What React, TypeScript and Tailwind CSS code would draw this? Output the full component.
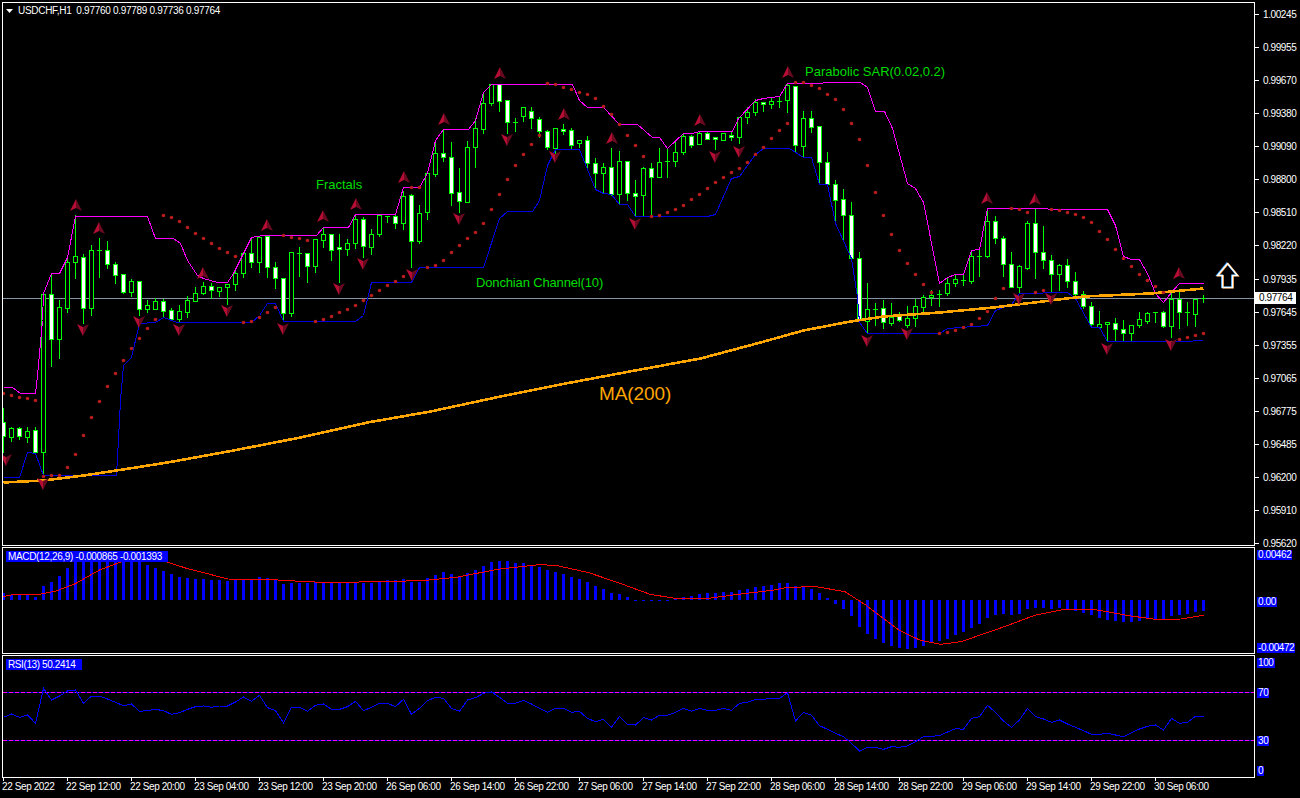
const GREEN = "#00ff00";

// high, body top, body bottom, low, white body (y values in page pixels, candle i sits at x = 3 + 8i)
const candles: number[][] = [
  [408, 422, 436, 452, 1], [427, 428, 437, 441, 0], [427, 428, 436, 439, 1], [427, 431, 437, 442, 0], [427, 430, 452, 452, 1],
  [294, 294, 452, 473, 0], [273, 294, 339, 366, 1], [300, 307, 339, 358, 0], [255, 262, 308, 312, 0], [215, 256, 262, 278, 0],
  [254, 257, 308, 323, 1], [245, 250, 308, 315, 0], [238, 250, 250, 277, 0], [241, 250, 264, 268, 1], [262, 264, 275, 283, 1],
  [274, 274, 292, 293, 1], [279, 281, 292, 296, 0], [281, 281, 309, 315, 1], [300, 305, 309, 312, 0], [298, 301, 309, 309, 0],
  [299, 301, 311, 317, 1], [308, 310, 319, 319, 1], [305, 311, 319, 322, 0], [296, 300, 312, 317, 0], [287, 293, 301, 301, 0],
  [282, 286, 293, 294, 0], [283, 286, 290, 298, 1], [287, 287, 291, 296, 0], [284, 284, 287, 304, 0], [270, 273, 284, 290, 0],
  [253, 253, 273, 277, 0], [237, 253, 262, 267, 1], [237, 237, 262, 272, 0], [236, 236, 267, 277, 1], [262, 267, 278, 288, 1],
  [278, 278, 313, 320, 1], [252, 252, 313, 316, 0], [247, 253, 253, 276, 0], [253, 253, 266, 282, 1], [239, 239, 266, 272, 0],
  [227, 234, 240, 247, 0], [234, 234, 250, 260, 1], [234, 247, 249, 282, 1], [239, 243, 249, 255, 0], [215, 219, 243, 248, 0],
  [217, 219, 246, 257, 1], [229, 234, 247, 254, 0], [215, 215, 234, 236, 0], [216, 216, 216, 222, 0], [215, 216, 223, 228, 1],
  [191, 196, 223, 229, 0], [194, 195, 241, 267, 1], [205, 213, 241, 243, 0], [172, 173, 212, 219, 0], [143, 153, 174, 176, 0],
  [129, 153, 157, 161, 1], [142, 157, 193, 205, 1], [168, 192, 201, 212, 1], [141, 147, 202, 202, 0], [118, 128, 147, 167, 0],
  [92, 103, 129, 133, 0], [84, 84, 103, 105, 0], [84, 84, 101, 111, 1], [100, 100, 122, 133, 1], [118, 122, 122, 131, 0],
  [107, 107, 116, 121, 0], [107, 111, 118, 128, 1], [117, 119, 131, 137, 1], [130, 131, 147, 149, 1], [128, 128, 148, 157, 0],
  [124, 129, 131, 134, 1], [128, 130, 145, 148, 1], [140, 140, 143, 147, 0], [136, 140, 163, 167, 1], [158, 163, 173, 189, 1],
  [163, 167, 173, 193, 0], [148, 167, 194, 195, 1], [151, 161, 194, 203, 0], [161, 161, 193, 200, 1], [180, 193, 196, 216, 1],
  [167, 168, 195, 215, 0], [163, 168, 177, 215, 1], [148, 162, 177, 177, 0], [148, 161, 161, 177, 0], [142, 152, 161, 166, 0],
  [133, 136, 152, 154, 0], [135, 136, 145, 147, 1], [131, 133, 144, 144, 0], [131, 133, 139, 139, 1], [137, 137, 139, 149, 1],
  [133, 133, 140, 140, 0], [131, 135, 137, 140, 1], [117, 117, 137, 143, 0], [107, 112, 117, 123, 0], [99, 102, 112, 115, 0],
  [102, 102, 104, 111, 1], [98, 101, 104, 108, 0], [97, 101, 101, 107, 0], [84, 85, 100, 112, 0], [86, 86, 145, 152, 1],
  [111, 118, 146, 157, 0], [111, 118, 127, 132, 1], [126, 126, 162, 184, 1], [152, 162, 184, 184, 1], [180, 184, 200, 224, 1],
  [189, 199, 215, 240, 1], [202, 215, 258, 259, 1], [252, 258, 320, 320, 1], [283, 309, 321, 333, 0], [303, 309, 309, 325, 0],
  [300, 308, 322, 328, 1], [303, 317, 323, 325, 0], [312, 316, 320, 321, 1], [306, 318, 325, 327, 0], [299, 306, 318, 326, 0],
  [295, 297, 307, 311, 0], [290, 295, 297, 305, 0], [290, 294, 294, 306, 0], [278, 283, 293, 295, 0], [275, 279, 283, 286, 0],
  [275, 280, 280, 285, 0], [250, 256, 281, 283, 0], [250, 256, 256, 276, 0], [208, 221, 256, 257, 0], [216, 221, 238, 243, 1],
  [236, 238, 264, 276, 1], [252, 264, 287, 287, 1], [265, 266, 287, 293, 0], [221, 223, 268, 269, 0], [208, 223, 252, 278, 1],
  [226, 252, 260, 268, 1], [255, 260, 274, 292, 1], [264, 265, 274, 290, 0], [259, 265, 281, 287, 1], [272, 281, 294, 295, 1],
  [291, 294, 306, 308, 1], [302, 306, 324, 325, 1], [311, 324, 327, 327, 0], [322, 322, 324, 341, 0], [318, 323, 329, 341, 1],
  [320, 329, 333, 341, 1], [325, 325, 333, 341, 0], [312, 319, 325, 327, 0], [312, 313, 321, 323, 0], [312, 312, 312, 322, 0],
  [311, 312, 326, 327, 1], [293, 299, 326, 337, 0], [290, 299, 312, 328, 1], [302, 312, 312, 325, 0], [299, 299, 314, 326, 0],
  [295, 298, 298, 302, 0],
];

const upper = [[3,387],[12,387],[20,393],[35,393],[37,375],[42,320],[43,293],[51,273],[59,273],[67,257],[75,216],[147,216],[155,238],[173,238],[180,243],[187,260],[197,275],[203,278],[217,282],[227,282],[233,273],[243,253],[251,237],[263,235],[316,235],[323,227],[348,227],[355,214],[395,214],[403,187],[419,187],[427,173],[435,140],[443,129],[468,129],[475,120],[483,92],[491,84],[572,84],[579,100],[587,107],[603,107],[619,124],[637,124],[652,137],[659,137],[667,148],[683,133],[692,133],[699,131],[732,131],[738,118],[755,100],[763,98],[779,96],[787,83],[860,82],[867,87],[875,111],[884,111],[892,128],[907,183],[915,188],[923,202],[939,283],[947,277],[955,274],[963,274],[971,250],[979,249],[987,208],[1107,209],[1115,225],[1123,256],[1131,259],[1139,259],[1147,273],[1155,293],[1163,302],[1171,292],[1179,283],[1203,283]];

const lower = [[3,477],[19,477],[27,452],[35,453],[43,475],[116,475],[117,457],[120,400],[123,365],[131,357],[139,323],[155,322],[163,317],[177,322],[251,322],[259,315],[267,303],[275,303],[283,321],[355,321],[363,315],[371,282],[411,282],[419,267],[483,267],[499,218],[507,211],[532,211],[539,200],[547,165],[555,149],[579,149],[595,189],[603,193],[611,194],[619,204],[627,204],[635,216],[707,216],[715,214],[731,178],[739,176],[755,154],[763,148],[789,148],[803,157],[811,157],[819,184],[827,184],[835,223],[851,258],[857,297],[859,322],[867,333],[939,333],[947,328],[987,325],[995,310],[1011,304],[1019,293],[1067,292],[1075,298],[1091,327],[1099,327],[1107,341],[1183,341],[1203,340]];

const ma200 = [[3,482],[43,480],[83,475],[116,470],[167,462],[233,450],[300,437],[367,422],[430,411],[500,396],[560,384],[640,369],[700,358],[760,342],[803,330],[850,321],[883,316],[939,312],[993,307],[1050,300],[1083,296],[1150,293],[1203,288]];

// parabolic SAR, [candle index, y]
const sar: number[][] = [[0,393],[1,395],[2,397],[3,398],[4,400],[5,476],[6,475],[7,475],[8,467],[9,454],[10,435],[11,417],[12,401],[13,386],[14,373],[15,360],[16,348],[17,338],[18,328],[19,319],[20,215],[21,217],[22,221],[23,227],[24,233],[25,238],[26,243],[27,248],[28,252],[29,256],[30,322],[31,321],[32,317],[33,312],[34,307],[35,235],[36,237],[37,238],[38,240],[39,321],[40,319],[41,316],[42,312],[43,309],[44,305],[45,300],[46,295],[47,290],[48,285],[49,281],[50,276],[51,187],[52,187],[53,267],[54,265],[55,260],[56,252],[57,245],[58,238],[59,232],[60,223],[61,209],[62,194],[63,179],[64,165],[65,154],[66,144],[67,135],[68,83],[69,84],[70,87],[71,89],[72,92],[73,94],[74,98],[75,106],[76,114],[77,124],[78,135],[79,145],[80,156],[81,216],[82,215],[83,212],[84,209],[85,205],[86,199],[87,194],[88,188],[89,182],[90,177],[91,172],[92,168],[93,162],[94,154],[95,147],[96,138],[97,130],[98,123],[99,82],[100,82],[101,85],[102,88],[103,94],[104,99],[105,109],[106,123],[107,139],[108,165],[109,192],[110,215],[111,234],[112,250],[113,263],[114,274],[115,284],[116,292],[117,333],[118,332],[119,330],[120,327],[121,324],[122,318],[123,311],[124,298],[125,288],[126,208],[127,209],[128,212],[129,292],[130,290],[131,209],[132,210],[133,212],[134,214],[135,217],[136,222],[137,231],[138,239],[139,249],[140,258],[141,266],[142,274],[143,280],[144,286],[145,292],[146,342],[147,339],[148,337],[149,335],[150,333]];

const fractalsUp = [[76,205],[99,228],[203,273],[267,225],[323,216],[356,204],[404,177],[444,119],[500,73],[564,114],[612,138],[700,120],[788,72],[987,198],[1035,199],[1179,273]];
const fractalsDown = [[6,460],[43,484],[83,330],[139,322],[179,330],[227,311],[283,329],[339,289],[363,264],[412,275],[459,219],[507,140],[555,157],[635,224],[715,157],[739,152],[867,341],[907,334],[1019,299],[1051,299],[1107,349],[1171,345]];

const macdBars = [160,165,165,165,172,138,126,108,84,62,60,58,58,58,58,58,58,62,75,84,93,102,111,114,117,117,120,120,123,120,118,118,112,114,118,132,129,129,128,125,125,126,129,129,126,129,129,123,120,120,118,125,125,114,105,96,102,108,99,90,78,66,63,63,69,69,75,81,90,96,102,111,117,126,138,147,159,162,171,182,182,184,182,182,176,170,168,162,160,160,156,156,150,147,141,138,135,129,129,138,141,147,159,174,192,207,228,261,282,297,309,318,324,327,324,318,309,303,297,285,276,264,252,234,225,222,225,222,207,204,204,207,204,207,213,219,225,234,240,243,246,246,243,237,237,237,228,225,222,216,213];

const macdSignal = [[8,170],[35,163],[95,163],[135,153],[180,132],[240,90],[300,62],[400,65],[450,85],[550,117],[670,120],[740,125],[800,128],[900,125],[1020,122],[1100,112],[1200,88],[1300,74],[1340,76],[1420,98],[1500,132],[1568,163],[1628,175],[1698,177],[1768,165],[1868,150],[1898,142],[1968,140],[2038,155],[2088,195],[2168,270],[2218,300],[2268,313],[2318,305],[2418,262],[2498,225],[2568,208],[2638,208],[2728,228],[2788,238],[2848,237],[2903,226]];

const rsi = [532,522,532,525,550,445,480,468,453,450,490,468,468,477,487,497,492,514,512,508,512,523,518,508,500,498,502,498,498,486,471,484,466,503,512,548,502,502,514,496,492,508,508,500,484,512,502,490,490,500,478,523,505,482,472,475,505,514,480,473,460,456,472,490,490,481,492,505,517,505,505,517,514,535,545,538,562,530,553,555,533,540,526,526,517,505,514,505,511,511,505,511,490,487,478,478,475,475,458,543,517,526,557,568,580,590,610,633,622,622,628,620,622,618,605,590,589,587,576,566,568,535,530,496,517,543,562,540,505,530,537,547,540,552,562,572,583,583,580,585,590,578,567,559,555,570,535,550,547,529,529];

const prices = ["1.00245","0.99955","0.99670","0.99380","0.99090","0.98800","0.98510","0.98220","0.97935","0.97645","0.97355","0.97065","0.96775","0.96485","0.96200","0.95910","0.95620"];

const times = ["22 Sep 2022","22 Sep 12:00","22 Sep 20:00","23 Sep 04:00","23 Sep 12:00","23 Sep 20:00","26 Sep 06:00","26 Sep 14:00","26 Sep 22:00","27 Sep 06:00","27 Sep 14:00","27 Sep 22:00","28 Sep 06:00","28 Sep 14:00","28 Sep 22:00","29 Sep 06:00","29 Sep 14:00","29 Sep 22:00","30 Sep 06:00"];

const arrow = "1227.5,263.5 1237.5,275.5 1232.5,275.5 1232.5,287.5 1222.5,287.5 1222.5,275.5 1217.5,275.5";

const toPoints = (pts: number[][]) => pts.map((p) => `${p[0] + 0.5},${p[1] + 0.5}`).join(" ");

const Candle = ({ c, i }: { c: number[]; i: number }) => {
  const x = 3 + 8 * i + 0.5;
  const [high, top, bottom, low, white] = c;
  return (
    <g>
      <line x1={x} x2={x} y1={high} y2={low + 1} stroke={GREEN} />
      {top === bottom ? (
        <line x1={x - 2.5} x2={x + 2.5} y1={top + 0.5} y2={top + 0.5} stroke={GREEN} />
      ) : (
        <rect x={x - 2} y={top + 0.5} width={4} height={bottom - top} fill={white ? "#ffffff" : "#000000"} stroke={GREEN} />
      )}
    </g>
  );
};

const Fractal = ({ x, y, down }: { x: number; y: number; down?: boolean }) => (
  <g transform={`translate(${x} ${y})${down ? " scale(1 -1)" : ""}`}>
    <polygon points="0,-6 0,3 -6,6" fill="#b40e34" />
    <polygon points="0,-6 0,3 6,6" fill="#6a0a20" />
  </g>
);

const PriceChart = () => (
  <svg viewBox="3 3 1251 542" className="block w-full h-full" shapeRendering="crispEdges">
    <line x1={3} x2={1254} y1={298.5} y2={298.5} stroke="#8494a4" />
    {candles.map((c, i) => (
      <Candle key={i} c={c} i={i} />
    ))}
    <polyline points={toPoints(upper)} fill="none" stroke="#ff00ff" />
    <polyline points={toPoints(lower)} fill="none" stroke="#0000e0" />
    <polyline points={toPoints(ma200)} fill="none" stroke="#ffa500" strokeWidth={2.6} />
    <g shapeRendering="auto">
      {sar.map(([i, y]) => (
        <circle key={i} cx={3.5 + 8 * i} cy={y + 0.5} r={1.8} fill="#b81c1c" />
      ))}
      {fractalsUp.map(([x, y]) => (
        <Fractal key={x} x={x} y={y} />
      ))}
      {fractalsDown.map(([x, y]) => (
        <Fractal key={x} x={x} y={y} down />
      ))}
      {/* buy arrow, with the fringes the reference shows on its edges */}
      <polygon points={arrow} transform="translate(-0.7 -0.3)" fill="none" stroke="#3aa0ff" strokeWidth={1.4} />
      <polygon points={arrow} transform="translate(0.7 0.3)" fill="none" stroke="#ff9a30" strokeWidth={1.4} />
      <polygon points={arrow} fill="none" stroke="#ffffff" strokeWidth={1.4} />
    </g>
  </svg>
);

const MacdChart = () => (
  <svg viewBox="3 548 1251 105" className="block w-full h-full" shapeRendering="crispEdges">
    {macdBars.map((zy, i) => {
      const y = 540 + zy / 3;
      return <rect key={i} x={2 + 8 * i} y={Math.min(y, 600)} width={3} height={Math.abs(y - 600)} fill="#0000ff" />;
    })}
    <polyline points={macdSignal.map(([zx, zy]) => `${zx / 2.412},${540 + zy / 3}`).join(" ")} fill="none" stroke="#ff0000" />
  </svg>
);

const RsiChart = () => (
  <svg viewBox="3 656 1251 121" className="block w-full h-full" shapeRendering="crispEdges">
    <line x1={3} x2={1254} y1={692.5} y2={692.5} stroke="#0000ff" />
    <line x1={3} x2={1254} y1={692.5} y2={692.5} stroke="#ff00ff" strokeDasharray="4 2" />
    <line x1={3} x2={1254} y1={740.5} y2={740.5} stroke="#0000ff" />
    <line x1={3} x2={1254} y1={740.5} y2={740.5} stroke="#ff00ff" strokeDasharray="4 2" />
    <polyline points={rsi.map((zy, i) => `${3.5 + 8 * i},${540 + zy / 3}`).join(" ")} fill="none" stroke="#0000ff" />
  </svg>
);

const AxisTag = ({ children, className }: { children: string; className?: string }) => (
  <div className={`w-fit h-[10px] ml-[2px] px-px bg-[#0000ff] text-white leading-[10px] ${className ?? ""}`}>{children}</div>
);

const App = () => {
  return (
    <div className="w-[1300px] h-[798px] bg-black text-white overflow-hidden pl-[2px] pt-[2px] text-[10px] tracking-[-0.4px] font-['Liberation_Sans',Arial,sans-serif]">
      {/* price pane */}
      <div className="flex h-[544px] relative">
        <div className="relative w-[1253px] h-full border border-white">
          <PriceChart />
          <div className="absolute left-[3px] top-[2px] flex items-center gap-[5px] tracking-[-0.3px]">
            <svg width="7" height="4" viewBox="0 0 7 4">
              <polygon points="0,0 7,0 3.5,4" fill="#ffffff" />
            </svg>
            <span className="leading-[12px] whitespace-pre">USDCHF,H1  0.97760 0.97789 0.97736 0.97764</span>
          </div>
          <div className="absolute left-[313px] top-[174px] text-[13px] tracking-normal text-[#00dd00] leading-[16px]">Fractals</div>
          <div className="absolute left-[473px] top-[272px] text-[13px] tracking-[-0.15px] text-[#00dd00] leading-[16px] whitespace-nowrap">Donchian Channel(10)</div>
          <div className="absolute left-[802px] top-[61px] text-[13px] tracking-normal text-[#00dd00] leading-[16px] whitespace-nowrap">Parabolic SAR(0.02,0.2)</div>
          <div className="absolute left-[596px] top-[380px] text-[19px] tracking-[-0.1px] text-[#ffa500] leading-[22px] whitespace-nowrap">MA(200)</div>
        </div>
        <div className="flex flex-col mt-[-4px]">
          {prices.map((p) => (
            <div key={p} className="h-[33.0625px] flex items-center shrink-0">
              <div className="w-[4px] h-px bg-white" />
              <span className="ml-[4px]">{p}</span>
            </div>
          ))}
        </div>
        <div className="absolute left-[1253px] top-[290px] w-[41px] h-[12px] bg-white text-black leading-[12px] pl-[4px]">0.97764</div>
      </div>
      {/* macd pane */}
      <div className="flex h-[107px] mt-px relative">
        <div className="relative w-[1253px] h-full border border-white">
          <MacdChart />
          <div className="absolute left-[3px] top-[3px] w-[162px] h-[11px] bg-[#0000ff] pl-[2px] leading-[11px] whitespace-nowrap tracking-[-0.34px]">MACD(12,26,9) -0.000865 -0.001393</div>
        </div>
        <div className="flex flex-col justify-between pt-[3px] pb-px">
          <AxisTag>0.00462</AxisTag>
          <AxisTag>0.00</AxisTag>
          <AxisTag>-0.00472</AxisTag>
        </div>
      </div>
      {/* rsi pane */}
      <div className="flex h-[123px] mt-px relative">
        <div className="relative w-[1253px] h-full border border-white">
          <RsiChart />
          <div className="absolute left-[3px] top-[3px] w-[76px] h-[11px] bg-[#0000ff] pl-[2px] leading-[11px] whitespace-nowrap">RSI(13) 50.2414</div>
        </div>
        <div className="flex flex-col pt-[3px]">
          <AxisTag>100</AxisTag>
          <AxisTag className="mt-[20px]">70</AxisTag>
          <AxisTag className="mt-[38px]">30</AxisTag>
          <AxisTag className="mt-[20px]">0</AxisTag>
        </div>
      </div>
      {/* time axis */}
      <div className="flex pl-px">
        {times.map((t) => (
          <div key={t} className="w-[64px] shrink-0">
            <div className="w-px h-[3px] bg-white" />
            <div className="ml-[-1px] leading-[12px] whitespace-nowrap">{t}</div>
          </div>
        ))}
      </div>
    </div>
  );
};

export default App;
